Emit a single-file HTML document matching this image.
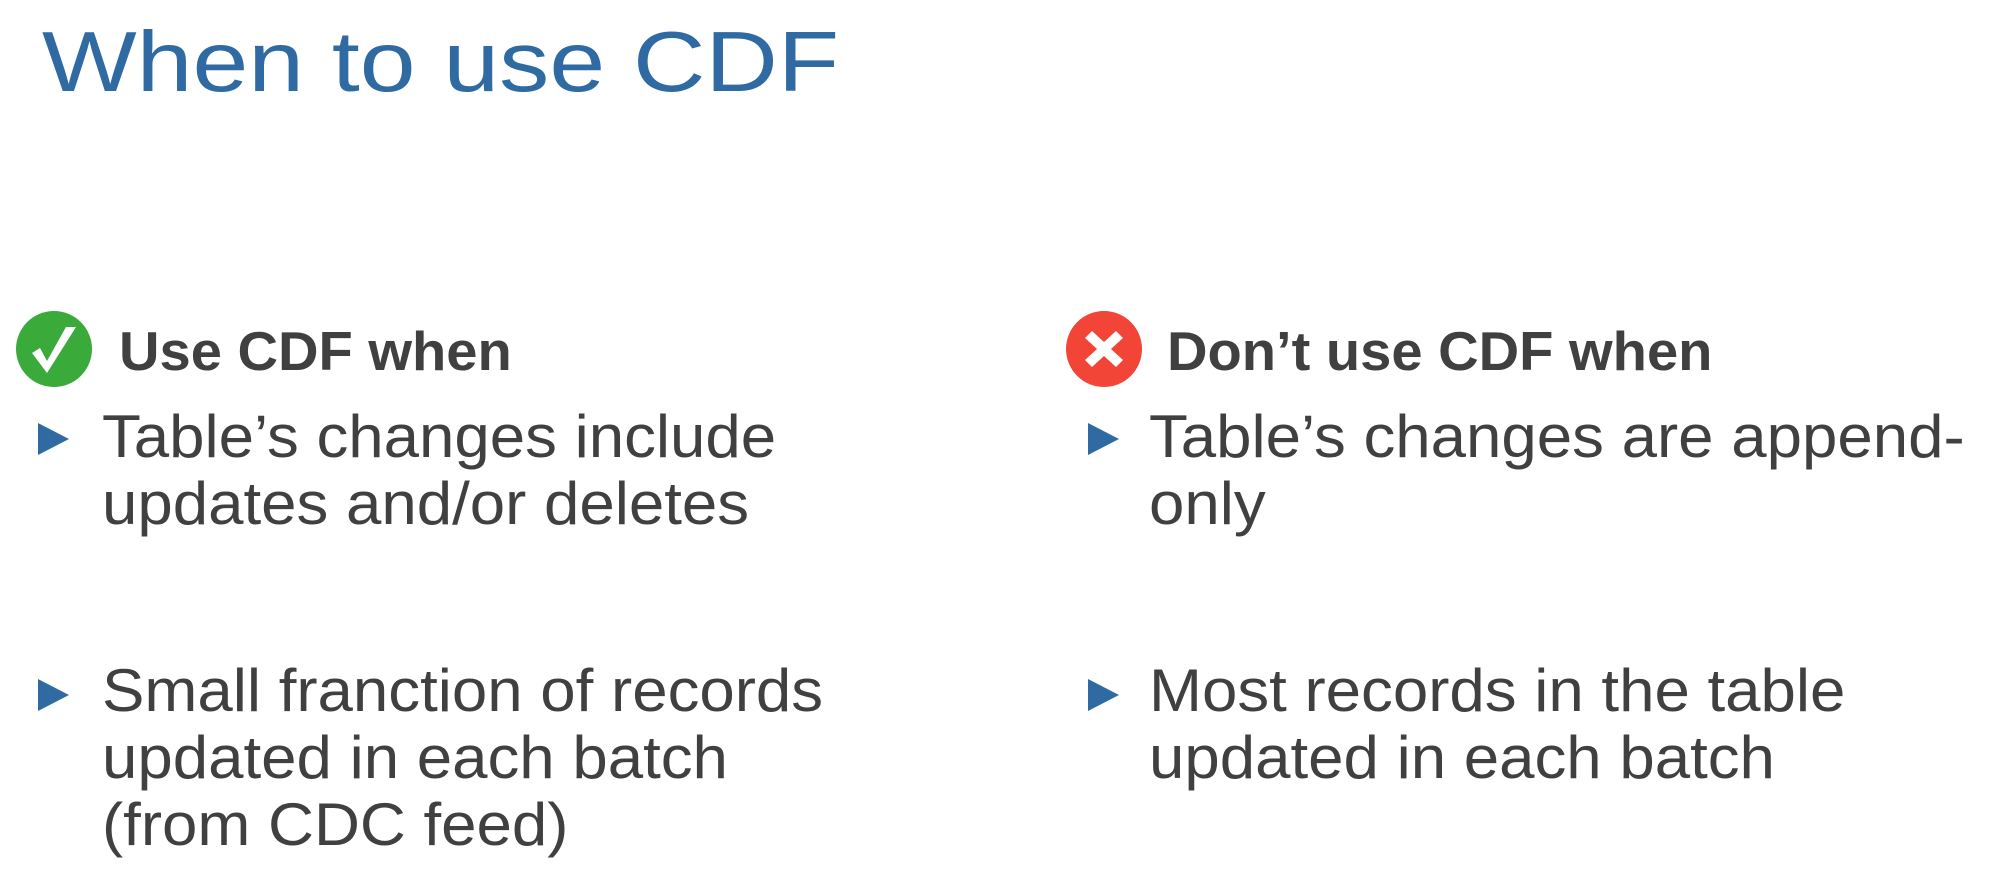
<!DOCTYPE html>
<html><head><meta charset="utf-8"><style>
body{margin:0;width:2006px;height:870px;background:#fff;position:relative;overflow:hidden;font-family:"Liberation Sans",sans-serif;}
.a{position:absolute;white-space:nowrap;line-height:1;transform-origin:0 0;}
.t{color:#2f6aa3;font-size:85px;left:42px;top:20px;transform:scaleX(1.18);}
.h{color:#404040;font-size:55px;font-weight:bold;transform:scaleX(1.02);}
.b{color:#404040;font-size:60px;transform:scaleX(1.06);}
.tri{position:absolute;width:0;height:0;border-top:16px solid transparent;border-bottom:16px solid transparent;border-left:31px solid #2f6aa3;}
</style></head><body>
<div class="a t">When to use CDF</div>

<svg class="a" style="left:16px;top:311px" width="76" height="76" viewBox="0 0 76 76"><circle cx="38" cy="38" r="38" fill="#3aaa3a"/><path d="M16 42 L24 37 L31 50 L50 16 L60 16 L31 62 Z" fill="#fff"/></svg>
<div class="a h" style="left:119px;top:324px">Use CDF when</div>

<div class="tri" style="left:38px;top:423px"></div>
<div class="a b" style="left:102px;top:407px">Table’s changes include</div>
<div class="a b" style="left:102px;top:474px">updates and/or deletes</div>

<div class="tri" style="left:38px;top:679px"></div>
<div class="a b" style="left:102px;top:661px">Small franction of records</div>
<div class="a b" style="left:102px;top:728px">updated in each batch</div>
<div class="a b" style="left:102px;top:795px">(from CDC feed)</div>

<svg class="a" style="left:1066px;top:311px" width="76" height="76" viewBox="0 0 76 76"><circle cx="38" cy="38" r="38" fill="#f24437"/><path d="M26 20 L38 31 L50 20 L57 27 L45 38 L57 49 L50 56 L38 45 L26 56 L19 49 L31 38 L19 27 Z" fill="#fff"/></svg>
<div class="a h" style="left:1167px;top:324px">Don’t use CDF when</div>

<div class="tri" style="left:1088px;top:423px"></div>
<div class="a b" style="left:1149px;top:407px">Table’s changes are append-</div>
<div class="a b" style="left:1149px;top:474px">only</div>

<div class="tri" style="left:1088px;top:679px"></div>
<div class="a b" style="left:1149px;top:661px">Most records in the table</div>
<div class="a b" style="left:1149px;top:728px">updated in each batch</div>
</body></html>
